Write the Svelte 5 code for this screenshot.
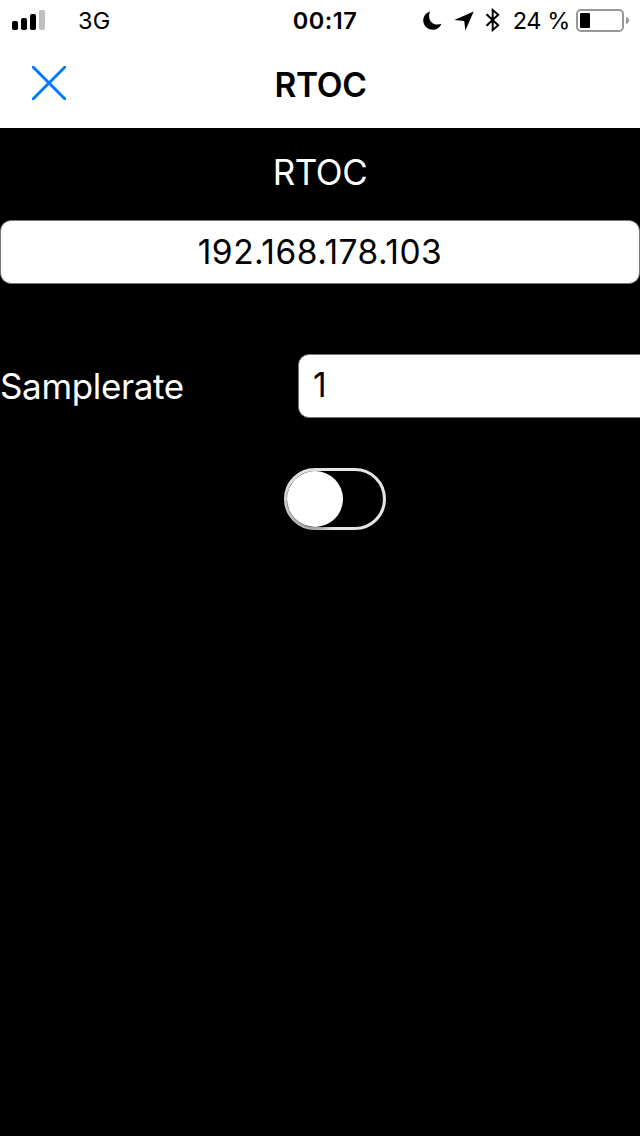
<script>
  let host = $state('192.168.178.103');
  let rate = $state('1');
  let on = $state(false);
</script>

<main>
  <header>
    <div class="status">
      <div class="left">
        <svg class="signal" width="34" height="20" viewBox="0 0 34 20">
          <rect x="0" y="11" width="6" height="9" rx="1.8" />
          <rect x="9" y="8" width="6" height="12" rx="1.8" />
          <rect x="18" y="4" width="6" height="16" rx="1.8" />
          <rect x="27" y="0" width="6" height="20" rx="1.8" fill="#bfbfbf" />
        </svg>
        <span class="carrier">3G</span>
      </div>
      <span class="clock">00:17</span>
      <div class="right">
        <svg class="moon" width="20" height="20" viewBox="0 0 20 20">
          <path d="M7 .4A9.4 9.4 0 1 0 18.4 12.8C10.5 16 3.5 9.2 7 .4Z" />
        </svg>
        <svg class="arrow" width="20" height="20" viewBox="0 0 20 20">
          <path d="M19.7.4L.3 8.9L10.2 10.1L11.4 19.5Z" />
        </svg>
        <svg class="bluetooth" width="16" height="24" viewBox="0 0 16 24">
          <path d="M1.5 6.3L13.2 17.2L7.7 22V2L13.2 6.8L1.5 17.7" fill="none" stroke="#000" stroke-width="2" />
        </svg>
        <span class="percent">24 %</span>
        <svg class="battery" width="54" height="24" viewBox="0 0 54 24">
          <rect x="1" y="1" width="46" height="21" rx="3.8" fill="none" stroke="#999" stroke-width="2" />
          <rect x="4" y="4" width="10" height="15" rx="1.2" />
          <path d="M50 8Q53 9 53 11.5Q53 14 50 15Z" fill="#999" />
        </svg>
      </div>
    </div>
    <nav>
      <button class="close" aria-label="Close">
        <svg width="34" height="34" viewBox="0 0 34 34">
          <path d="M1 1L33 33M33 1L1 33" stroke="#007aff" stroke-width="3" stroke-linecap="square" />
        </svg>
      </button>
      <h1>RTOC</h1>
    </nav>
  </header>

  <section>
    <h2>RTOC</h2>
    <input class="host" bind:value={host} aria-label="Host" />
    <div class="row">
      <label for="rate">Samplerate</label>
      <input id="rate" class="rate" bind:value={rate} />
    </div>
    <button class="switch" class:on role="switch" aria-checked={on} aria-label="Connect" onclick={() => (on = !on)}>
      <span class="knob"></span>
    </button>
  </section>
</main>

<style>
  :global(body) { background: #000; }
  main {
    width: 640px;
    height: 1136px;
    overflow: hidden;
    background: #000;
    color: #fff;
    font-family: Inter, "Liberation Sans", sans-serif;
  }
  header { height: 128px; background: #fff; color: #000; }
  .status {
    display: grid;
    grid-template-columns: 1fr auto 1fr;
    grid-template-rows: 42px;
    height: 40px;
    align-items: center;
    font-size: 23.5px;
    line-height: 42px;
  }
  svg { display: block; flex: none; }
  .left, .right { display: flex; align-items: center; height: 42px; white-space: nowrap; }
  .left { padding-left: 12px; }
  .right { justify-content: flex-end; }
  .signal { margin-bottom: 2px; }
  .carrier { margin-left: 32px; letter-spacing: 0.2px; }
  .clock { padding-left: 10px; font-weight: 600; letter-spacing: 0.5px; }
  .arrow { margin-left: 11px; }
  .bluetooth { margin: 0 0 2px 11px; }
  .percent { margin: 0 6px 0 12px; letter-spacing: -0.4px; }
  .battery { margin-right: 10px; }
  nav { display: grid; grid-template-columns: 98px 1fr 98px; grid-template-rows: 88px; height: 88px; align-items: center; }
  button { padding: 0; border: 0; background: none; }
  .close { margin: 0 0 2px 32px; width: 34px; height: 34px; }
  h1, h2 { margin: 0; text-align: center; }
  h1 { padding: 1px 0 0 1px; font-size: 33.5px; font-weight: 600; line-height: 88px; letter-spacing: -0.3px; }
  section { display: flex; flex-direction: column; }
  h2 { height: 92px; font-size: 35px; line-height: 88px; font-weight: 400; letter-spacing: -0.5px; }
  input {
    box-sizing: border-box;
    height: 64px;
    border: 1px solid #777;
    border-radius: 11px;
    outline: 0;
    background: #fff;
    color: #000;
    font: 400 33.5px Inter, "Liberation Sans", sans-serif;
  }
  .host { width: 640px; padding: 0; text-align: center; letter-spacing: 0.5px; }
  .row { display: flex; height: 64px; margin-top: 70px; }
  label { flex: 0 0 298px; font-size: 35px; line-height: 64px; letter-spacing: -0.35px; }
  .rate { flex: 0 0 360px; padding: 0 14px 2px; }
  .switch {
    display: flex;
    box-sizing: border-box;
    width: 102px;
    height: 62px;
    margin: 50px 0 0 284px;
    border: 3px solid #e5e5e5;
    border-radius: 31px;
  }
  .knob {
    width: 56px;
    height: 56px;
    border-radius: 50%;
    background: #fff;
    box-shadow: 0 3px 5px rgba(0, 0, 0, 0.4);
  }
  .on { justify-content: flex-end; background: #4cd964; }
</style>
